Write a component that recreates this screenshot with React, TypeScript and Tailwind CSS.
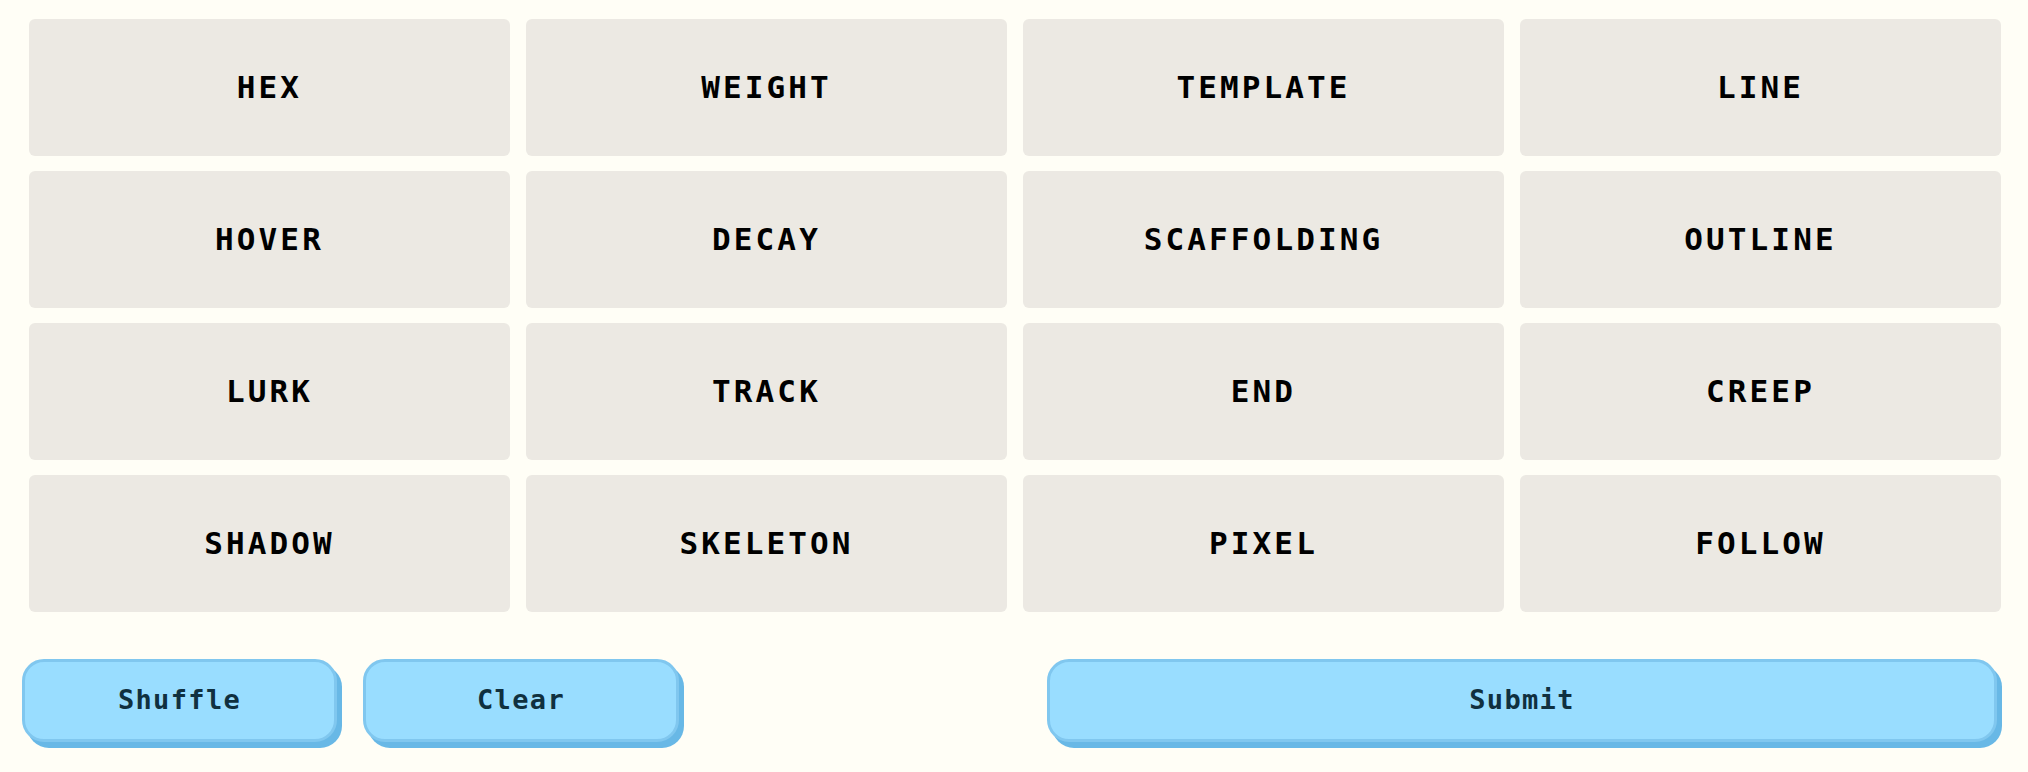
const words = [
  'HEX', 'WEIGHT', 'TEMPLATE', 'LINE',
  'HOVER', 'DECAY', 'SCAFFOLDING', 'OUTLINE',
  'LURK', 'TRACK', 'END', 'CREEP',
  'SHADOW', 'SKELETON', 'PIXEL', 'FOLLOW',
];

function Tile({ word }: { word: string }) {
  return (
    <button className="flex h-[137px] items-center justify-center rounded-md bg-[#ece9e3] text-[31px] font-bold tracking-[0.1em] text-black">
      {word}
    </button>
  );
}

function ActionButton({ label, className }: { label: string; className: string }) {
  return (
    <button
      className={`flex h-[83px] items-center justify-center rounded-[22px] border-[3px] border-[#80c7ef] bg-[#99ddff] text-[27px] font-bold tracking-[0.05em] text-[#10303f] shadow-[5px_6px_0_#68b8e6] ${className}`}
    >
      {label}
    </button>
  );
}

export default function App() {
  return (
    <div
      className="min-h-[772px] w-[2028px] bg-[#fffef6] pt-[19px]"
      style={{ fontFamily: '"DejaVu Sans Mono", "Liberation Mono", monospace' }}
    >
      <div className="ml-[29px] grid w-[1972px] grid-cols-4 gap-x-[16px] gap-y-[15px]">
        {words.map((w) => (
          <Tile key={w} word={w} />
        ))}
      </div>
      <div className="ml-[22px] mt-[47px] flex w-[1975px]">
        <ActionButton label="Shuffle" className="w-[315px]" />
        <ActionButton label="Clear" className="ml-[26px] w-[316px]" />
        <ActionButton label="Submit" className="ml-auto w-[950px]" />
      </div>
    </div>
  );
}
